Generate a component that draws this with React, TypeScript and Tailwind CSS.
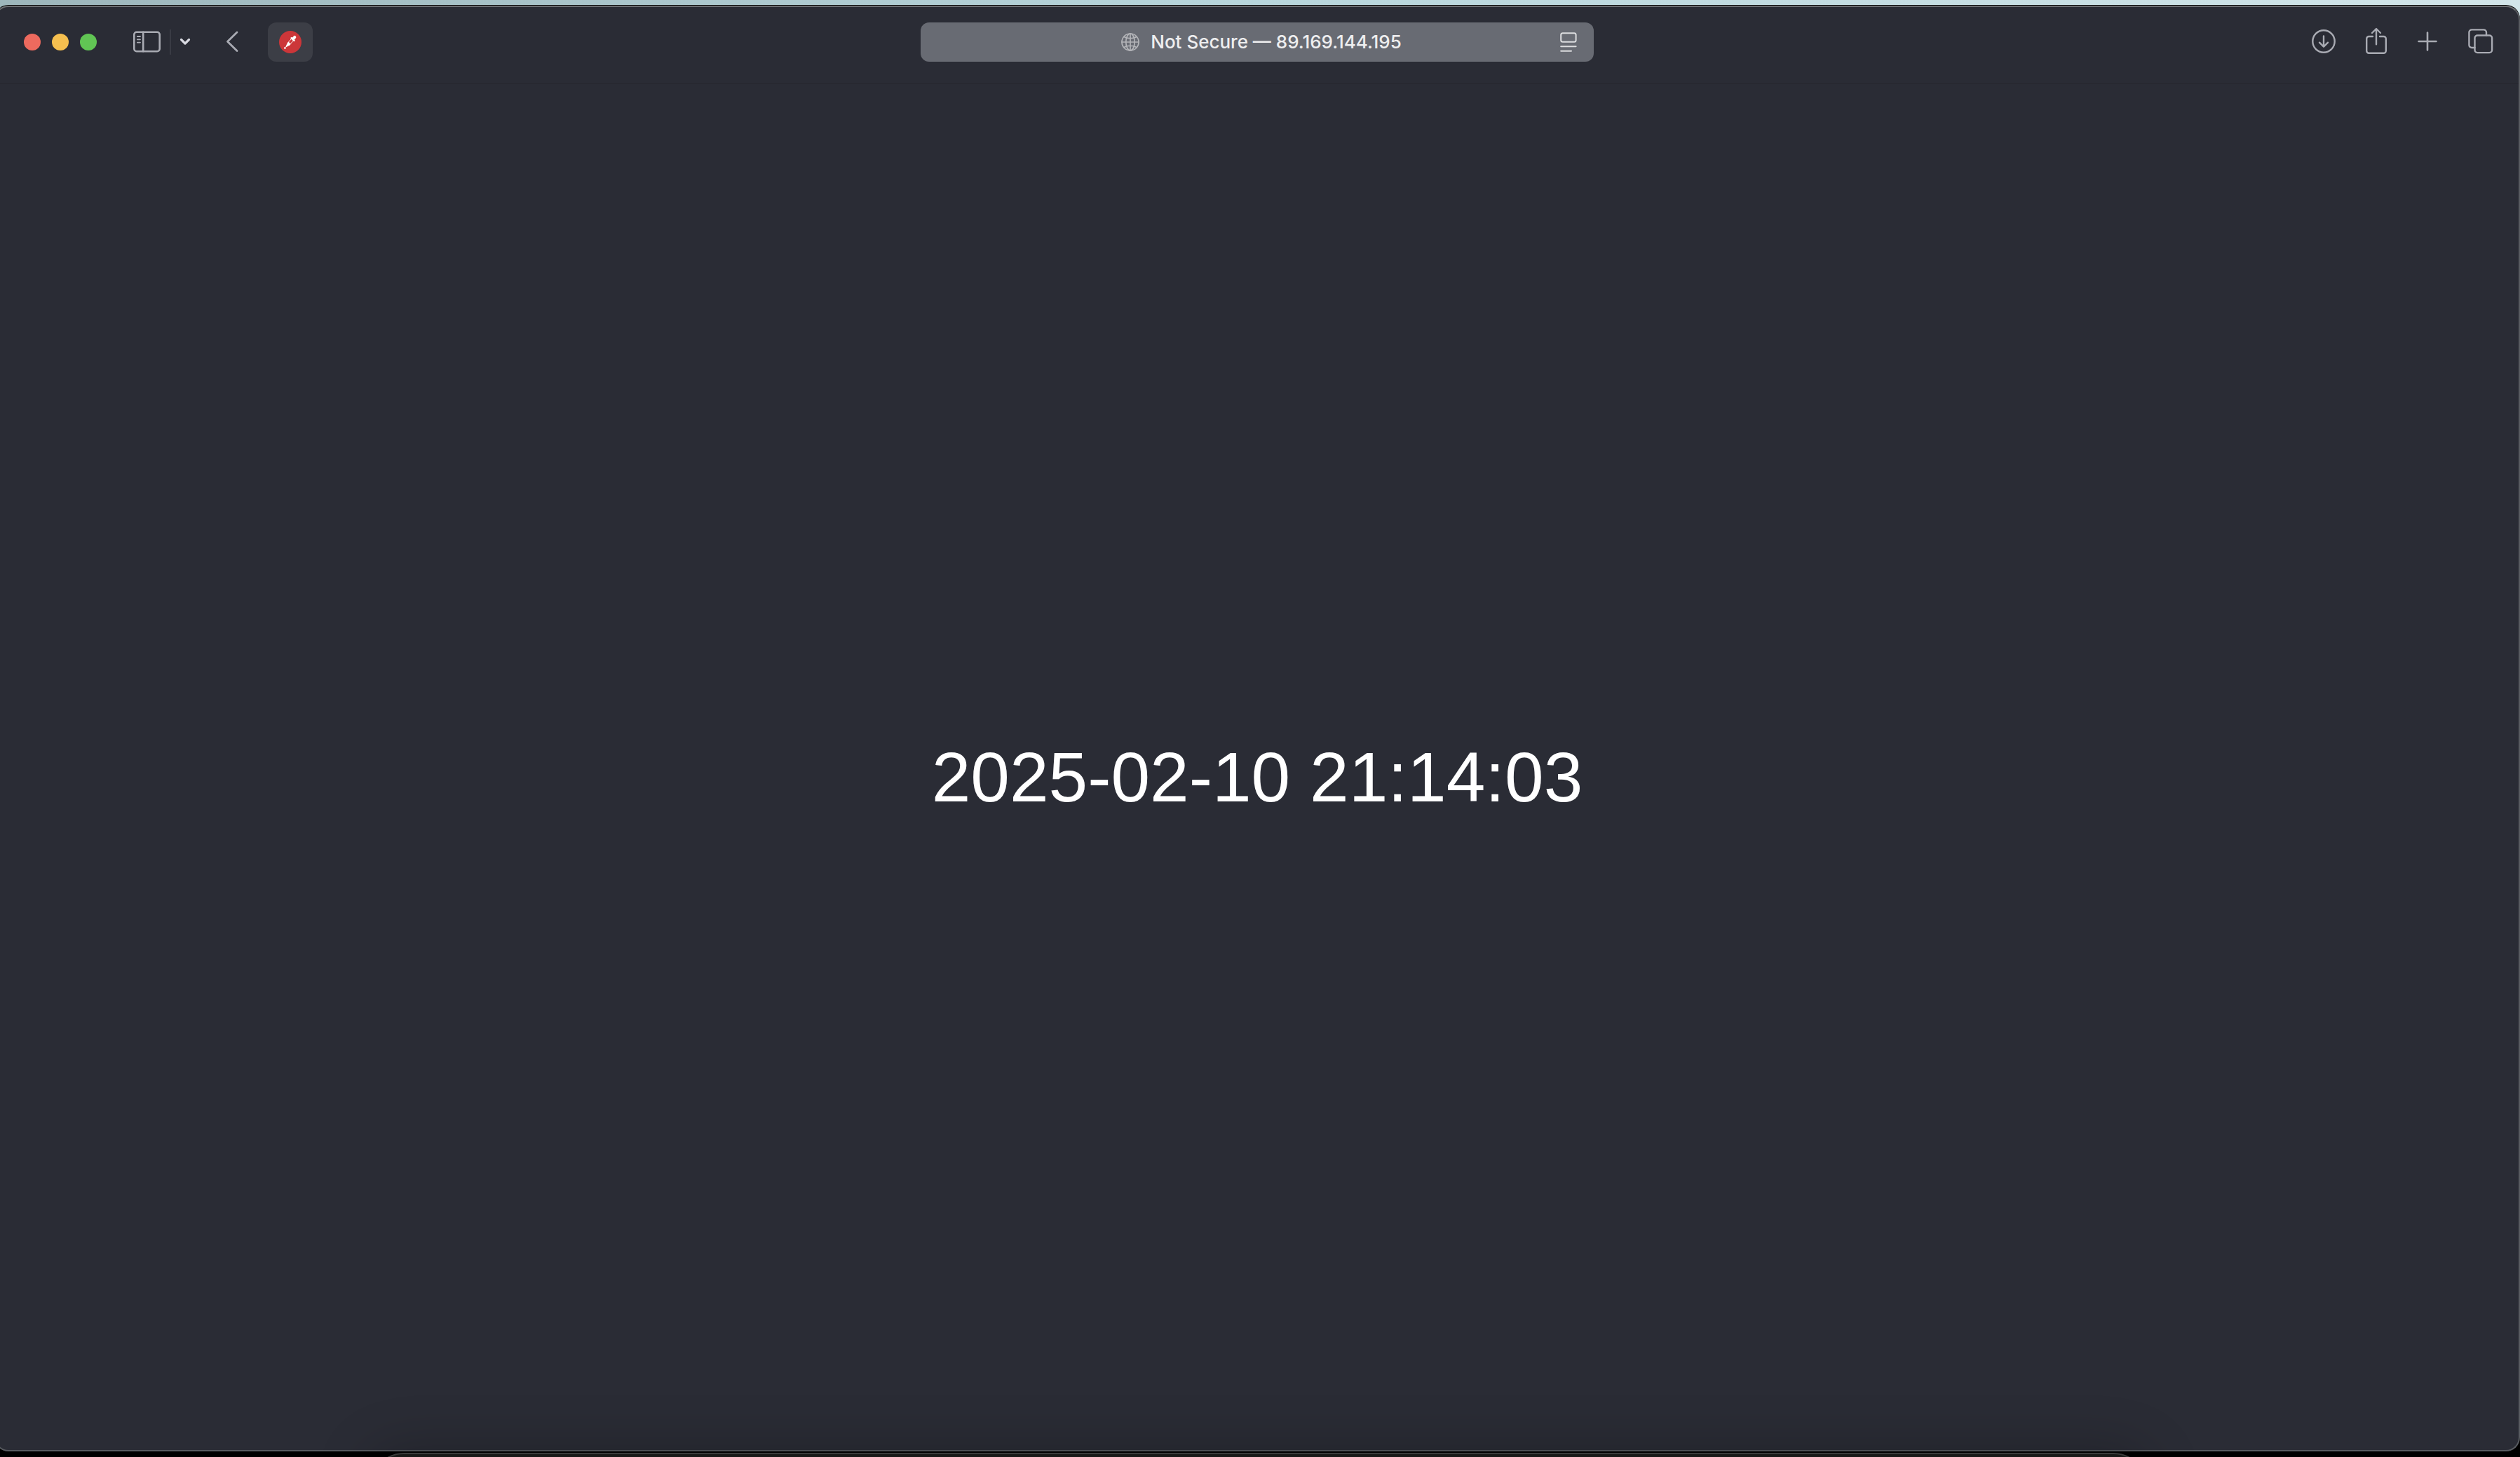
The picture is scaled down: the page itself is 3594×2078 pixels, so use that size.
import type { ReactNode } from "react";

const lights = [
  { name: "Close", tone: "bg-[#ed6a5e]" },
  { name: "Minimize", tone: "bg-[#f5bf4f]" },
  { name: "Zoom", tone: "bg-[#61c554]" },
];

function ToolButton({ label, className = "", children }: { label: string; className?: string; children: ReactNode }) {
  return (
    <button type="button" aria-label={label} className={"flex h-14 items-center justify-center " + className}>
      {children}
    </button>
  );
}

const stroke = {
  fill: "none",
  stroke: "currentColor",
  strokeLinecap: "round" as const,
  strokeLinejoin: "round" as const,
};

function SidebarIcon() {
  return (
    <svg width="40" height="32" viewBox="0 0 40 32" {...stroke} strokeWidth="2.6">
      <rect x="1.3" y="1.8" width="36.4" height="27.4" rx="3.5" />
      <path d="M14.2 1.8v27.4" />
      <path d="M5.8 8h4.2M5.8 12.3h4.2M5.8 16.6h4.2" strokeWidth="1.8" />
    </svg>
  );
}

function DropperBadge() {
  return (
    <svg width="32" height="32" viewBox="0 0 32 32">
      <circle cx="16" cy="16" r="16" fill="#cc3639" />
      <g transform="rotate(42 16 16)" fill="#fff">
        <rect x="13.9" y="4.6" width="4.2" height="7" rx="2.1" />
        <rect x="12.2" y="9.4" width="7.6" height="2.6" rx="1.2" />
        <path d="M14.1 12v5.5M17.9 12v5.5" stroke="#fff" strokeWidth="0.9" />
        <path d="M13.6 17.4h4.8v2l-1.9 6h-1L13.600 19.400z" />
        <circle cx="16" cy="27.3" r="1.4" />
      </g>
    </svg>
  );
}

function GlobeIcon() {
  return (
    <svg width="26" height="26" viewBox="0 0 26 26" {...stroke} strokeWidth="1.7">
      <circle cx="13" cy="13" r="12" />
      <ellipse cx="13" cy="13" rx="6.2" ry="12" />
      <path d="M13 1v24M1 13h24M4 5.5c5 3 13 3 18 0M4 20.5c5-3 13-3 18 0" />
    </svg>
  );
}

function ReaderIcon() {
  return (
    <svg width="24" height="28" viewBox="0 0 24 28" {...stroke} strokeWidth="2">
      <rect x="1.2" y="1.2" width="21.4" height="12.6" rx="2.5" />
      <path d="M1.2 20.2h21.4M1.2 26.7h14.8" />
    </svg>
  );
}

function DownloadIcon() {
  return (
    <svg width="36" height="36" viewBox="0 0 36 36" {...stroke} strokeWidth="2.4">
      <circle cx="18" cy="18" r="15.7" />
      <path d="M18 10.5v15M12 19.7l6 6 6-6" />
    </svg>
  );
}

function ShareIcon() {
  return (
    <svg width="32" height="40" viewBox="0 0 32 40" {...stroke} strokeWidth="2.4">
      <path d="M12 13H6.5a3.3 3.3 0 0 0-3.3 3.3v17.2a3.3 3.3 0 0 0 3.3 3.3h21a3.3 3.3 0 0 0 3.3-3.3V16.3a3.3 3.3 0 0 0-3.3-3.3H22" />
      <path d="M17 24.3V2.5M11 8l6-6 6 6" />
    </svg>
  );
}

function PlusIcon() {
  return (
    <svg width="28" height="28" viewBox="0 0 28 28" {...stroke} strokeWidth="2.6">
      <path d="M14 1.5v25M1.5 14h25" />
    </svg>
  );
}

function TabsIcon() {
  return (
    <svg width="36" height="36" viewBox="0 0 36 36" {...stroke} strokeWidth="2.4">
      <rect x="9.5" y="9.5" width="24.6" height="24.6" rx="3.8" />
      <path d="M9.5 27H5.2a3.8 3.8 0 0 1-3.8-3.8V5.2a3.8 3.8 0 0 1 3.8-3.8h17a3.8 3.8 0 0 1 3.8 3.8v4.2" />
    </svg>
  );
}

function Toolbar() {
  return (
    <header className="grid h-[110px] shrink-0 grid-cols-[1fr_960px_1fr] items-center border-b border-[#25262d] pb-2.5 text-[#a9abb3]">
      <div className="flex items-center pl-10">
        <div className="flex gap-4">
          {lights.map((light) => (
            <button key={light.name} type="button" aria-label={light.name} className={"size-6 rounded-full " + light.tone} />
          ))}
        </div>
        <ToolButton label="Toggle sidebar" className="ml-13">
          <SidebarIcon />
        </ToolButton>
        <span className="ml-3 h-9 w-0.5 bg-[#393b44]" />
        <ToolButton label="Tab groups" className="ml-3 text-[#d9dae2]">
          <svg width="16" height="12" viewBox="0 0 16 12" {...stroke} strokeWidth="3.2">
            <path d="M2.5 2.5l5.5 5.5 5.5-5.5" />
          </svg>
        </ToolButton>
        <ToolButton label="Back" className="ml-12">
          <svg width="22" height="32" viewBox="0 0 22 32" {...stroke} strokeWidth="2.8">
            <path d="M18 2L4.5 15.2 18 28.4" />
          </svg>
        </ToolButton>
        <ToolButton label="Color picker extension" className="ml-10 w-16 rounded-xl bg-[#3c3e46]">
          <DropperBadge />
        </ToolButton>
      </div>

      <div className="flex h-14 items-center rounded-xl bg-[#686b73] pr-6 pl-15">
        <button type="button" className="flex flex-1 items-center justify-center gap-4 text-[#eeeeef]">
          <span className="text-[#b3b4b8]">
            <GlobeIcon />
          </span>
          <span className="font-[Inter,sans-serif] text-[26px] leading-8 font-medium">Not Secure — 89.169.144.195</span>
        </button>
        <button type="button" aria-label="Show reader" className="text-[#dcdddf]">
          <ReaderIcon />
        </button>
      </div>

      <div className="flex items-center justify-end gap-10 pr-9 pb-0.5">
        <ToolButton label="Downloads">
          <DownloadIcon />
        </ToolButton>
        <ToolButton label="Share">
          <ShareIcon />
        </ToolButton>
        <ToolButton label="New tab" className="ml-1">
          <PlusIcon />
        </ToolButton>
        <ToolButton label="Show tab overview" className="ml-1">
          <TabsIcon />
        </ToolButton>
      </div>
    </header>
  );
}

export default function App() {
  return (
    <div className="relative flex h-screen flex-col overflow-hidden bg-[linear-gradient(to_right,#9db6bb,#b8d6dc_50%,#d2e5e9)]">
      <div className="h-[7px] shrink-0" />
      <div className="-ml-2 flex flex-1 flex-col rounded-t-[20px] bg-black">
        <div className="mt-px mb-2 flex flex-1 flex-col overflow-hidden rounded-[20px] border-2 border-[#585b60] border-t-[#6e7073] bg-[#2a2c35]">
          <Toolbar />
          <main className="flex flex-1 items-center justify-center pt-7">
            <time dateTime="2025-02-10T21:14:03" className="font-['Liberation_Sans',sans-serif] text-[100px] leading-none text-white">
              2025-02-10 21:14:03
            </time>
          </main>
        </div>
      </div>
      <div className="absolute right-[532px] -bottom-24 left-[528px] h-[102px] rounded-[48px] border-2 border-[#3b3c3b] bg-[#191a18] shadow-[0_0_80px_rgba(0,0,0,0.25)]" />
    </div>
  );
}
